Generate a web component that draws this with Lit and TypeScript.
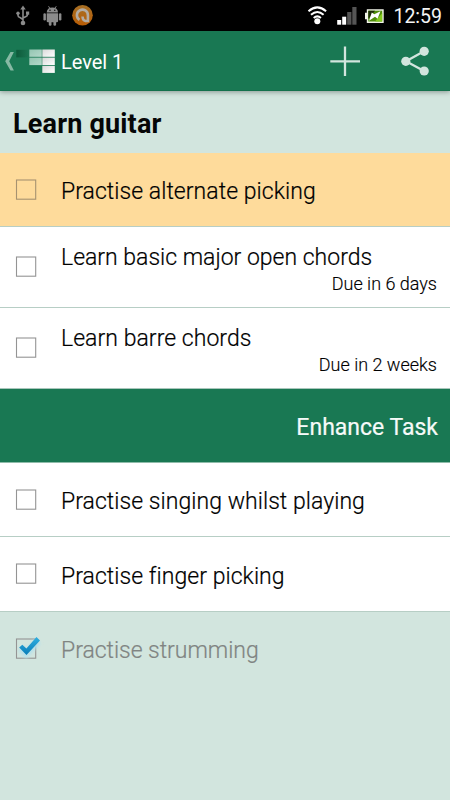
import { LitElement, html, css, svg, nothing } from "lit";
import { customElement } from "lit/decorators.js";
import { classMap } from "lit/directives/class-map.js";

interface Task {
  title: string;
  due?: string;
  active?: boolean;
  done?: boolean;
  cls: string;
}

const current: Task[] = [
  { title: "Practise alternate picking", active: true, cls: "t1" },
  { title: "Learn basic major open chords", due: "Due in 6 days", cls: "t2" },
  { title: "Learn barre chords", due: "Due in 2 weeks", cls: "t3" },
];

const enhance: Task[] = [
  { title: "Practise singing whilst playing", cls: "t4" },
  { title: "Practise finger picking", cls: "t5" },
  { title: "Practise strumming", done: true, cls: "t6" },
];

@customElement("status-bar")
class StatusBar extends LitElement {
  static styles = css`
    :host { display: flex; height: 31px; background: #000; color: #f4f4f4; flex: none; }
    .icons { width: 386px; height: 31px; flex: none; display: block; }
    .clock { flex: 1; padding-right: 8px; text-align: right; font-size: 19.5px; line-height: 33px; white-space: nowrap; }
  `;
  render() {
    return html`
      <svg class="icons" viewBox="0 0 386 31">
        <g stroke="#8b8b8b" fill="none" stroke-width="1.6">
          <path d="M23 8V22M18 12.5V15.500Q18 17 20 17.500L23 19.500M27.500 12V14.500Q27.500 16 26 16.500L23 18" />
        </g>
        <path d="M20.300 9.500L23 5.500L25.700 9.500Z" fill="#8b8b8b" />
        <circle cx="23" cy="23" r="2.300" fill="#8b8b8b" />
        <circle cx="18" cy="13.200" r="1.700" fill="#8b8b8b" />
        <rect x="26" y="11.500" width="3.200" height="3.200" fill="#8b8b8b" />
        <g fill="#8b8b8b">
          <path d="M46.700 12.500Q47 7.500 52.400 7.500Q57.800 7.500 58 12.500Z" />
          <path d="M48.500 6.200L50 8.500M56.300 6.200L54.800 8.500" stroke="#8b8b8b" stroke-width="0.900" />
          <path d="M46.700 13.300H58.100V21Q58.100 22.300 56.800 22.300H48Q46.700 22.300 46.700 21Z" />
          <rect x="43.400" y="13.300" width="2.500" height="7.200" rx="1.200" />
          <rect x="58.900" y="13.300" width="2.500" height="7.200" rx="1.200" />
          <rect x="48.800" y="20" width="2.700" height="5.800" rx="1.200" />
          <rect x="53.400" y="20" width="2.700" height="5.800" rx="1.200" />
        </g>
        <circle cx="50" cy="10.300" r="0.700" fill="#000" />
        <circle cx="54.800" cy="10.300" r="0.700" fill="#000" />
        <defs>
          <linearGradient id="o" x2="0" y2="1">
            <stop offset="0" stop-color="#a66f24" /><stop offset="1" stop-color="#b95d06" />
          </linearGradient>
        </defs>
        <circle cx="82.500" cy="15.300" r="10.300" fill="url(#o)" />
        <path d="M79.500 19.800A5.500 5.500 0 1 1 87.900 15.300V21H85.500Q82.700 20.500 82.500 16.500" fill="none" stroke="#b3aca3" stroke-width="2.600" />
        <g fill="none" stroke="#fff" stroke-width="2">
          <path d="M308.500 11.200Q317.300 3.600 326.100 11.200" />
          <path d="M311 14.800Q317.300 9.200 323.600 14.800" />
          <path d="M313.700 18Q317.300 14.700 320.900 18" />
        </g>
        <circle cx="317.300" cy="21.300" r="3" fill="#fff" />
        <rect x="337.200" y="20" width="4" height="4.700" fill="#fff" />
        <rect x="342.200" y="16.700" width="4" height="8" fill="#fff" />
        <rect x="347.200" y="12" width="4.200" height="12.700" fill="#555" />
        <rect x="352.300" y="7" width="4.200" height="17.700" fill="#555" />
        <path d="M365 12.800H366.800V9.200H383.700V23H366.800V19.200H365Z" fill="#f1f3e9" />
        <rect x="368.300" y="10.700" width="13.900" height="10.800" fill="#4f8e09" />
        <path d="M368.300 10.700H375L368.300 19Z" fill="#1d2e08" />
        <path d="M382.200 13V21.500H375Z" fill="#83c91d" />
        <path d="M369 20.800L371.800 12.500L374.300 14.300L380.500 11.300L377.500 18.700L375 16.800Z" fill="#fff" />
      </svg>
      <div class="clock">12:59</div>
    `;
  }
}

@customElement("action-bar")
class ActionBar extends LitElement {
  static styles = css`
    :host { display: flex; height: 60px; background: #197853; color: #fff; flex: none; align-items: center; border-bottom: 1px solid #13714c; box-sizing: border-box; box-shadow: 0 1px 5px rgba(0, 0, 0, 0.35); position: relative; }
    .logo { width: 61px; height: 60px; flex: none; }
    .name { flex: 1; font-size: 20px; line-height: 60px; letter-spacing: -0.05px; padding-top: 2px; }
    .actions { width: 140px; height: 60px; flex: none; }
  `;
  render() {
    return html`
      <svg class="logo" viewBox="0 31 61 60">
        <defs>
          <linearGradient id="a"><stop offset="0" stop-color="#0d5a3a" /><stop offset="1" stop-color="#1b7552" /></linearGradient>
          <linearGradient id="b" x2="1" y2="1"><stop offset="0" stop-color="#93c5b1" /><stop offset="1" stop-color="#b5d8ca" /></linearGradient>
          <linearGradient id="c" x2="1" y2="1"><stop offset="0" stop-color="#d9d9d9" /><stop offset="1" stop-color="#fff" /></linearGradient>
        </defs>
        <path d="M10.500 52H13.900L9.200 61.200L13.900 70.400H10.500L5.200 61.200Z" fill="#87b9a4" />
        <rect x="16.300" y="49.800" width="12.500" height="7.600" fill="url(#a)" />
        <rect x="29.300" y="49.500" width="12.500" height="7.300" fill="url(#b)" />
        <rect x="42.300" y="49.500" width="12.500" height="7.300" fill="url(#c)" />
        <rect x="29.300" y="57.600" width="12.500" height="7.500" fill="url(#b)" />
        <rect x="42.300" y="57.600" width="12.500" height="7.500" fill="url(#c)" />
        <rect x="42.300" y="65.900" width="12.500" height="7" fill="url(#c)" />
      </svg>
      <div class="name">Level 1</div>
      <svg class="actions" viewBox="310 31 140 60">
        <path d="M330.300 61.300H360M345 46.500V76" stroke="#d2e5de" stroke-width="2.300" />
        <path d="M424 51.300L406 61.300L424 71" stroke="#d2e5de" stroke-width="2.300" fill="none" />
        <circle cx="424.200" cy="51.300" r="4.600" fill="#d2e5de" />
        <circle cx="405.800" cy="61.300" r="4.600" fill="#d2e5de" />
        <circle cx="424.200" cy="71" r="4.600" fill="#d2e5de" />
      </svg>
    `;
  }
}

@customElement("task-row")
class TaskRow extends LitElement {
  static properties = { task: { attribute: false } };
  declare task: Task;
  static styles = css`
    :host { display: block; }
    .row { display: flex; align-items: center; height: 74px; box-sizing: border-box; background: #fff; border-bottom: 1px solid #b7cec5; color: #000; }
    .active { background: #fedb9b; }
    .tall { height: 81px; }
    .t3 { border-bottom-color: #a9c6bb; }
    .t5 { height: 75px; }
    .done { background: #d2e5de; border-color: transparent; color: #808482; }
    .box { width: 61px; height: 40px; flex: none; }
    .tall .box { margin-bottom: 1px; }
    .body { flex: 1; display: flex; flex-direction: column; white-space: nowrap; padding-top: 5px; }
    .title { font-size: 23px; font-weight: 300; line-height: 30px; letter-spacing: 0.05px; -webkit-text-stroke: 0.2px currentColor; }
    .done .title { letter-spacing: -0.03px; }
    .t2 .title { letter-spacing: 0; }
    .tall .body { padding-top: 1px; }
    .tall .title { line-height: 31px; }
    .due { font-size: 18px; font-weight: 300; line-height: 21px; text-align: right; padding-right: 13px; -webkit-text-stroke: 0.15px currentColor; }
  `;
  render() {
    const t = this.task;
    return html`
      <div class=${classMap({ row: true, active: !!t.active, done: !!t.done, tall: !!t.due, [t.cls]: true })}>
        <svg class="box" viewBox="0 0 61 40">
          <rect x="16.500" y="10" width="19.200" height="19.200" fill="none" stroke=${t.active ? "#a69270" : "#949494"} stroke-width="1.100" />
          ${t.done
            ? svg`
              <defs>
                <filter id="g" x="-40%" y="-40%" width="180%" height="180%"><feGaussianBlur stdDeviation="1.6" /></filter>
                <linearGradient id="k" x2="0" y2="1"><stop offset="0" stop-color="#30afe0" /><stop offset="1" stop-color="#087db8" /></linearGradient>
              </defs>
              <path d="M21 19L26.200 24.800L38 12" fill="none" stroke="#b5e0ea" stroke-width="7" filter="url(#g)" />
              <path d="M19.200 18.500L22.300 15.800L26.400 19.500L36.500 8L40 11.500L26.500 26Z" fill="url(#k)" />`
            : nothing}
        </svg>
        <div class="body">
          <div class="title">${t.title}</div>
          ${t.due ? html`<div class="due">${t.due}</div>` : nothing}
        </div>
      </div>
    `;
  }
}

@customElement("app-root")
class AppRoot extends LitElement {
  static styles = css`
    :host { display: flex; flex-direction: column; width: 450px; height: 800px; overflow: hidden; background: #d2e5de; font-family: Roboto, sans-serif; font-weight: 400; }
    .heading { height: 62px; line-height: 66px; padding-left: 13px; font-size: 27px; letter-spacing: 0.17px; font-weight: 700; color: #060707; flex: none; }
    .section { height: 74px; box-sizing: border-box; line-height: 77px; padding-right: 12px; text-align: right; font-size: 23px; font-weight: 400; -webkit-text-stroke: 0.2px currentColor; color: #f6faf8; background: #197853; border-bottom: 1px solid #8fbcaa; flex: none; }
  `;
  render() {
    return html`
      <status-bar></status-bar>
      <action-bar></action-bar>
      <div class="heading">Learn guitar</div>
      ${current.map((t) => html`<task-row .task=${t}></task-row>`)}
      <div class="section">Enhance Task</div>
      ${enhance.map((t) => html`<task-row .task=${t}></task-row>`)}
    `;
  }
}
